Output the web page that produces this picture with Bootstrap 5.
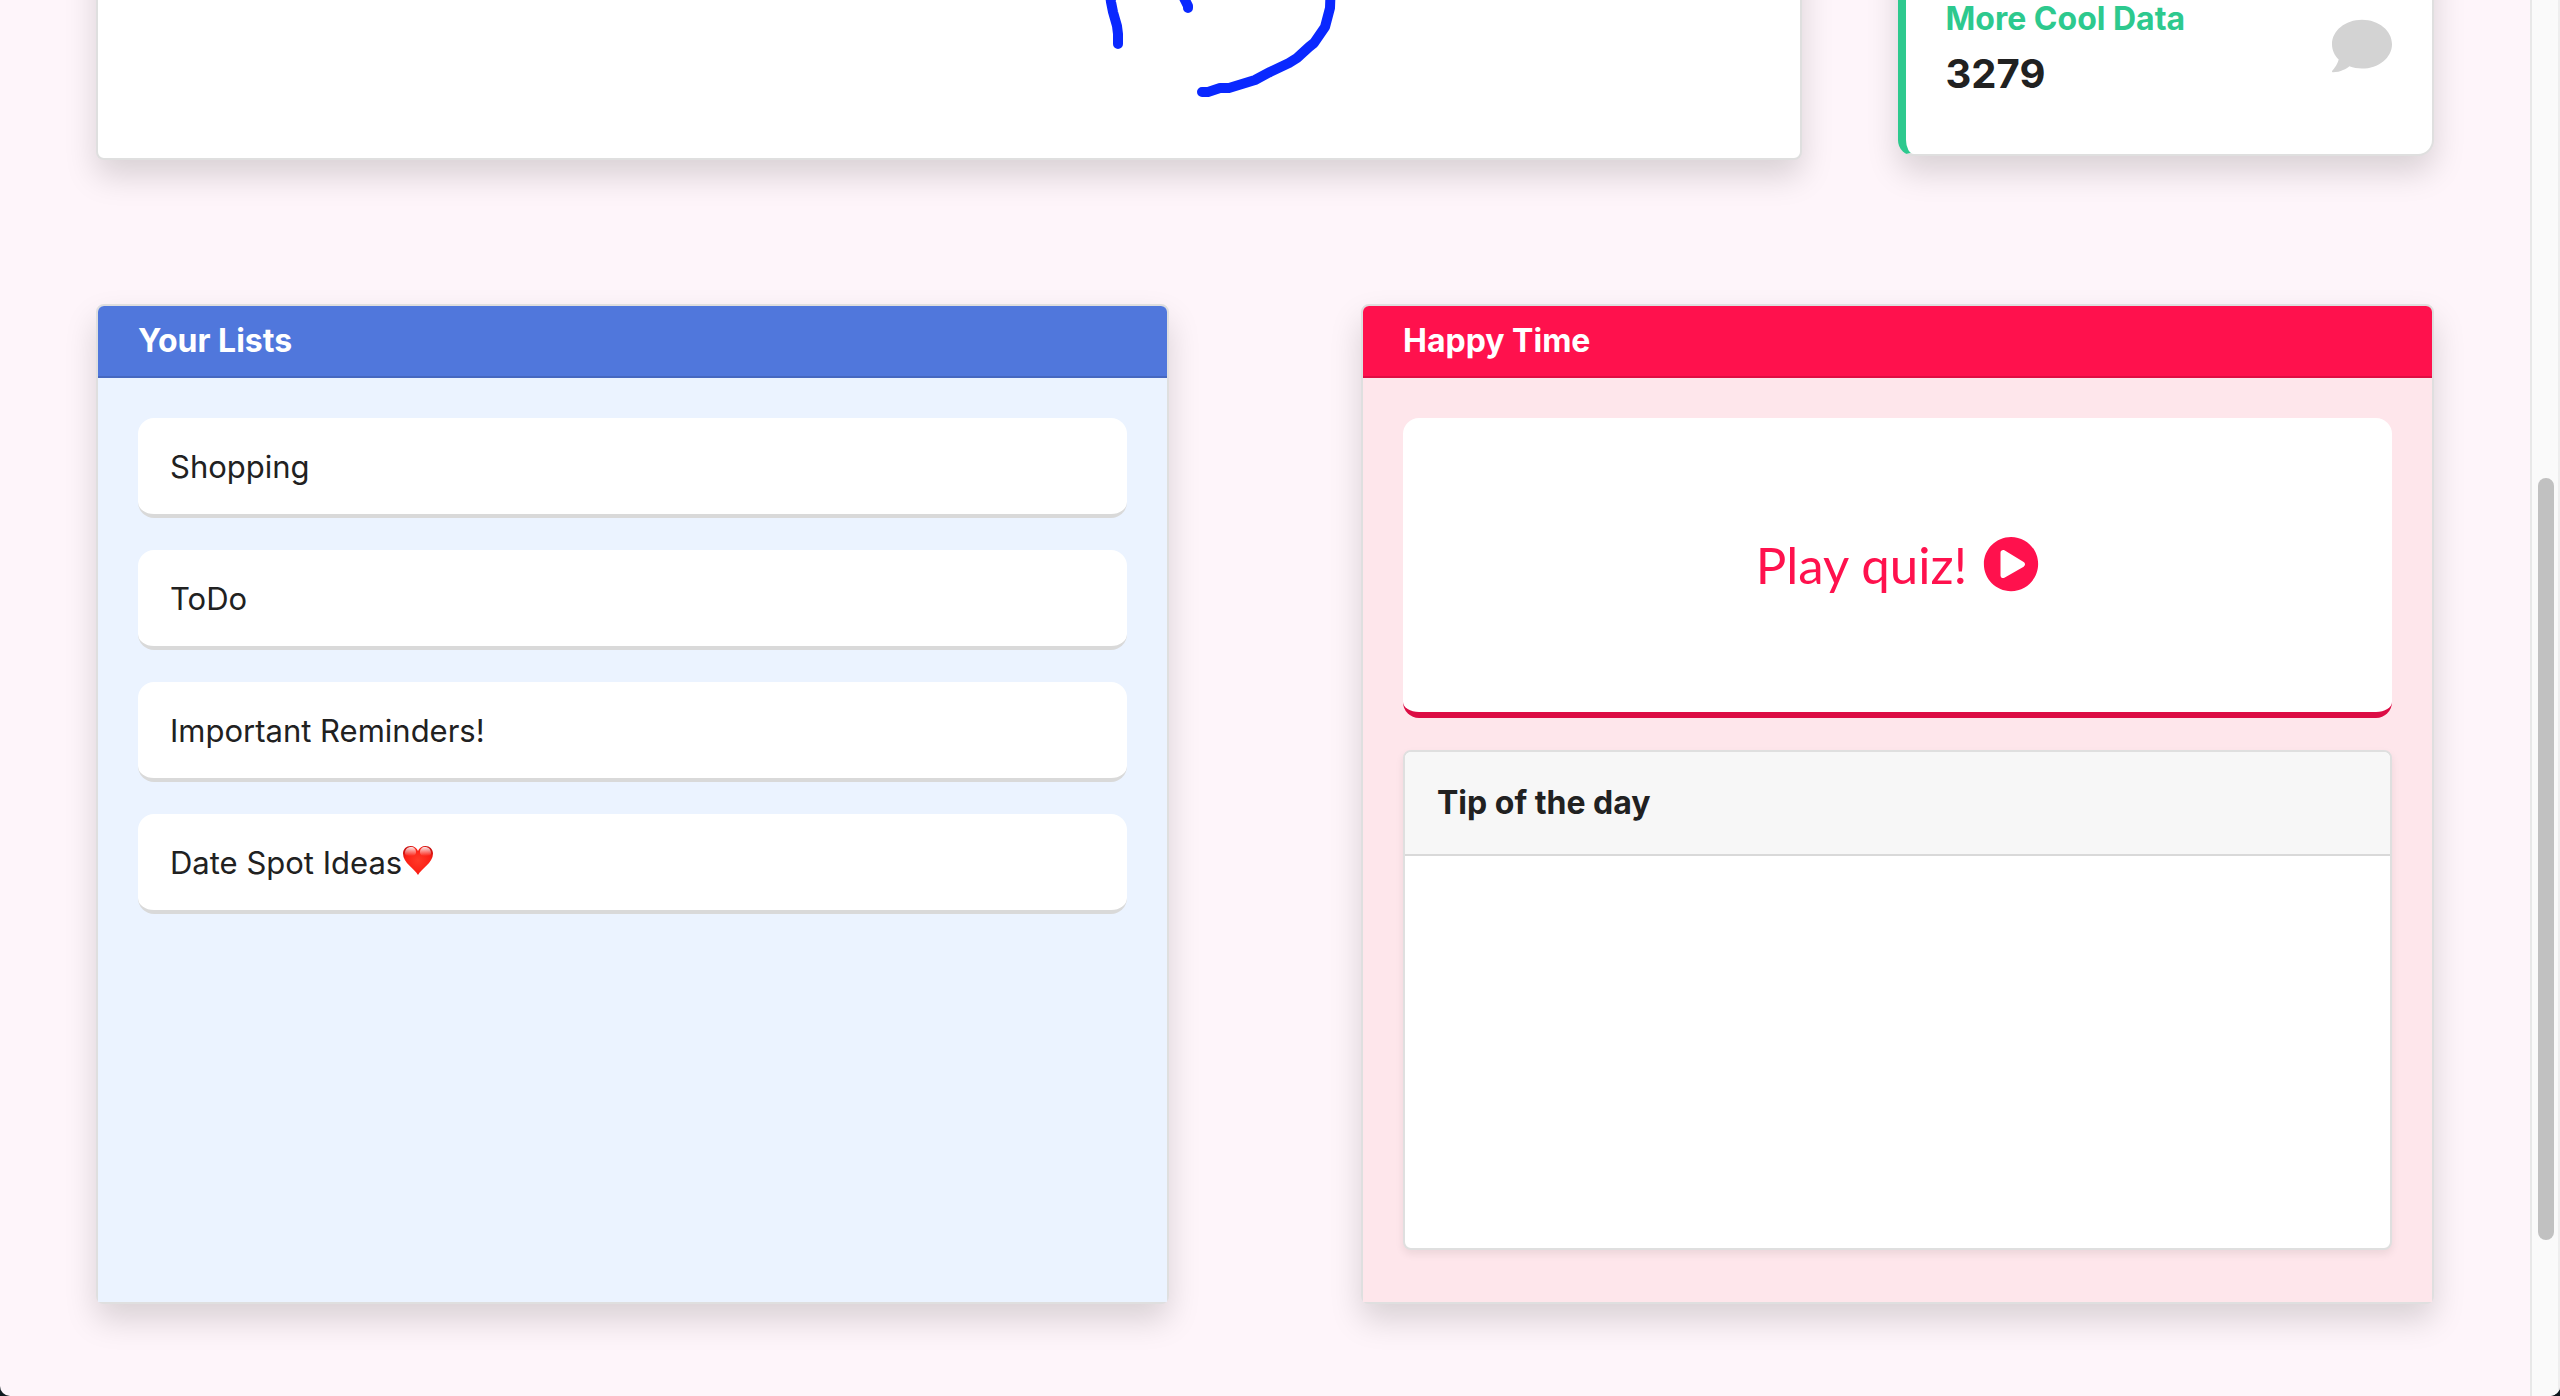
<!DOCTYPE html>
<html lang="en">
<head>
<meta charset="utf-8">
<meta name="viewport" content="width=device-width, initial-scale=1">
<title>Dashboard</title>
<link href="https://cdn.jsdelivr.net/npm/bootstrap@5.3.0/dist/css/bootstrap.min.css" rel="stylesheet">
<style>
  body { background: #101a1f; color: #212121; font-family: Inter, "Liberation Sans", sans-serif; font-size: 31px; line-height: 48px; }
  .window { background: #fef5fa; border-radius: 0 0 10px 10px; overflow: hidden; }
  .page { min-width: 0; }
  /* the page is scrolled, so the first row starts above the viewport */
  .scrolled { margin-top: -64px; margin-bottom: 144px; }
  .pad-x { padding-left: 96px; padding-right: 96px; }
  .pad-end { padding-right: 96px; }
  .panel { --bs-card-border-width: 2px; --bs-card-border-color: #dfdfdf; --bs-card-border-radius: 8px; --bs-card-inner-border-radius: 6px; color: inherit; box-shadow: 0 16px 32px rgba(0,0,0,.15); }
  .board { height: 224px; }
  .stat { height: 220px; --bs-card-border-radius: 16px; border-left: 8px solid #2dc98e; padding: 57px 40px 0 40px; }
  .stat-name { color: #2dc98e; font-size: 32px; line-height: 48px; font-weight: 700; margin: 0; }
  .stat-value { font-size: 40px; line-height: 62px; font-weight: 700; }
  .stat-icon { margin-top: 21px; }
  .tall { height: 1000px; }
  .bar { --bs-card-cap-padding-x: 40px; --bs-card-cap-padding-y: 11px; color: #fff; border-bottom: 2px solid rgba(0,0,0,.125); }
  .bar h2, .tip h3 { font-size: 32px; line-height: 48px; font-weight: 700; margin: 0; }
  .bar-blue { background: #5077dc; }
  .bar-red { background: #ff114d; }
  .area { padding: 40px; gap: 32px; }
  .area-blue { background: #ebf3ff; }
  .area-pink { background: #fee6eb; }
  .entry { background: #fff; color: inherit; border-radius: 16px; border-bottom: 4px solid #d9d9d9; padding: 25px 32px 23px; }
  .quiz { height: 300px; background: #fff; color: #ff114d; border: 0; border-bottom: 6px solid #dc0c44; border-radius: 16px; font-family: Lato, sans-serif; font-size: 51px; gap: 16px; }
  .quiz svg { margin-bottom: 2px; }
  .tip { height: 500px; box-shadow: 0 4px 8px rgba(0,0,0,.075); }
  .tip .card-header { background: #f7f7f7; padding: 27px 32px; border-bottom-color: #d9d9d9; }
  .track { width: 30px; background: #fafafa; border-left: 2px solid #e8e8e8; border-right: 2px solid #eee; padding: 478px 4px 0 6px; }
  .thumb { height: 762px; background: #c1c1c1; border-radius: 8px; }
</style>
</head>
<body>
<div class="window d-flex min-vh-100">
  <main class="page flex-grow-1">
    <div class="row g-0 scrolled">
      <div class="col-9 pad-x">
        <div class="card panel board">
          <svg width="1700" height="220" viewBox="98 -62 1700 220" fill="none" stroke="#0a28ff" stroke-width="10" stroke-linecap="round" stroke-linejoin="round" role="img" aria-label="Drawing board">
            <path d="M1108-20 1111 2 1113 12 1117 26 1118 34V44"/>
            <path d="M1180-20 1184-2 1188 6V8"/>
            <path d="M1202 92H1208L1220 88H1229L1255 80 1270 72 1289 63 1297 58 1309 47 1314 43 1325 27 1330 8 1331-20"/>
          </svg>
        </div>
      </div>
      <div class="col-3 pad-end">
        <div class="card panel stat flex-row justify-content-between align-items-start">
          <div>
            <h2 class="stat-name">More Cool Data</h2>
            <div class="stat-value">3279</div>
          </div>
          <svg class="stat-icon" width="60" height="60" viewBox="0 0 512 512" fill="#d3d3d3" aria-hidden="true"><path d="M256 32C114.600 32 0 125.100 0 240c0 49.600 21.400 95 57 130.700C44.500 421.100 2.700 466 2.200 466.500c-2.200 2.300-2.800 5.700-1.500 8.700S4.800 480 8 480c66.300 0 116-31.800 140.600-51.400 32.700 12.300 69 19.400 107.400 19.400 141.400 0 256-93.100 256-208S397.400 32 256 32z"/></svg>
        </div>
      </div>
    </div>

    <div class="row g-0">
      <section class="col-6 pad-x">
        <div class="card panel tall">
          <div class="card-header bar bar-blue"><h2>Your Lists</h2></div>
          <div class="card-body area area-blue d-flex flex-column">
            <a href="#" class="entry text-decoration-none">Shopping</a>
            <a href="#" class="entry text-decoration-none">ToDo</a>
            <a href="#" class="entry text-decoration-none">Important Reminders!</a>
            <a href="#" class="entry text-decoration-none d-flex align-items-center">Date Spot Ideas<svg class="mb-1" width="32" height="32" viewBox="0 0 32 32" aria-label="heart" role="img">
              <defs>
                <radialGradient id="heartFill" cx=".5" cy=".5" r=".6"><stop offset="0" stop-color="#ff3a28"/><stop offset=".7" stop-color="#fb1f15"/><stop offset="1" stop-color="#c40d0d"/></radialGradient>
                <linearGradient id="heartShine" x2="0" y2="1"><stop offset="0" stop-color="#fff" stop-opacity=".9"/><stop offset="1" stop-color="#fff" stop-opacity="0"/></linearGradient>
              </defs>
              <path fill="url(#heartFill)" d="M16 30C13 24 1 18 1 8.500 1 4 4.500 1 8.500 1 12 1 15 3 16 6 17 3 20 1 23.500 1 27.500 1 31 4 31 8.500 31 18 19 24 16 30z"/>
              <path fill="url(#heartShine)" d="M3 8C3 4 6 2 9 2s5 2 5 5-2 4-5 4-6 0-6-3zM18 7c0-3 2-5 5-5s6 2 6 6c0 3-3 3-6 3s-5-1-5-4z"/>
            </svg></a>
          </div>
        </div>
      </section>
      <section class="col-6 pad-x">
        <div class="card panel tall">
          <div class="card-header bar bar-red"><h2>Happy Time</h2></div>
          <div class="card-body area area-pink d-flex flex-column">
            <button type="button" class="quiz d-flex align-items-center justify-content-center">Play quiz!
              <svg width="56" height="56" viewBox="0 0 512 512" fill="currentColor" aria-hidden="true"><path d="M256 8C119 8 8 119 8 256s111 248 248 248 248-111 248-248S393 8 256 8zm115.700 272l-176 101c-15.800 8.800-35.700-2.500-35.700-21V152c0-18.400 19.800-29.800 35.700-21l176 107c16.400 9.200 16.400 32.900 0 42z"/></svg>
            </button>
            <div class="card panel tip">
              <div class="card-header"><h3>Tip of the day</h3></div>
              <div class="card-body"></div>
            </div>
          </div>
        </div>
      </section>
    </div>
  </main>
  <div class="track flex-shrink-0" aria-hidden="true"><div class="thumb"></div></div>
</div>
<script src="https://cdn.jsdelivr.net/npm/bootstrap@5.3.0/dist/js/bootstrap.bundle.min.js"></script>
</body>
</html>
